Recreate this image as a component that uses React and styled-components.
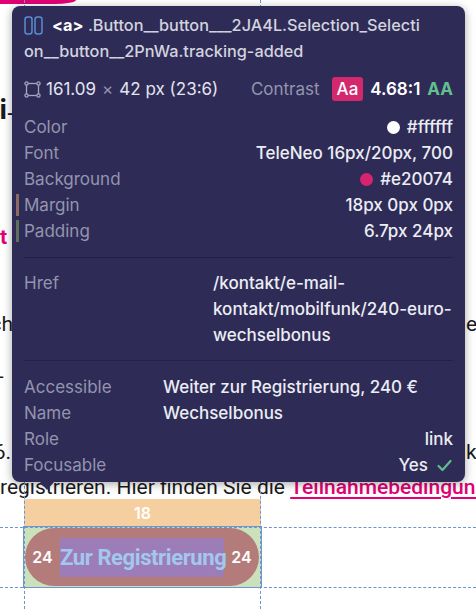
import React from "react"
import styled, { createGlobalStyle, css } from "styled-components"

const GlobalStyle = createGlobalStyle`
  html, body {
    margin: 0;
    padding: 0;
    background: #ffffff;
  }
  body {
    font-family: Roboto, "Noto Sans", sans-serif;
    overflow: hidden;
  }
`

const Page = styled.div`
  position: relative;
  width: 476px;
  height: 609px;
  overflow: hidden;
  background: #ffffff;
  display: flex;
  flex-direction: column;
`

const TopButtonEdge = styled.div`
  width: 76px;
  height: 4px;
  background: #e20074;
  border-bottom-right-radius: 22px 4px;
  flex: none;
`

const Line = styled.div`
  display: flex;
  justify-content: space-between;
  align-items: baseline;
  flex: none;
  height: ${(p) => p.$h}px;
  line-height: ${(p) => p.$h}px;
  margin-top: ${(p) => p.$mt || 0}px;
  font-size: ${(p) => p.$size || 21}px;
  font-weight: ${(p) => p.$weight || 400};
  color: ${(p) => p.$color || "#1a1a1a"};
  white-space: nowrap;
  overflow: hidden;
`

const LeftClip = styled.span`
  display: flex;
  justify-content: flex-end;
  width: ${(p) => p.$w}px;
  overflow: hidden;
`

const RightClip = styled.span`
  display: flex;
  width: ${(p) => p.$w}px;
  overflow: hidden;
`

const Tail = styled.span`
  font-size: 16px;
  margin-right: auto;
`

const Link = styled.span`
  color: #e20074;
  font-weight: 500;
  text-decoration: underline;
  text-underline-offset: 3px;
`

const Highlight = styled.div`
  margin-left: 24px;
  width: 237px;
  flex: none;
  display: flex;
  flex-direction: column;
`

const MarginArea = styled.div`
  height: 28px;
  background: #f6cfa0;
  color: #ffffff;
  font-family: Inter, sans-serif;
  font-weight: 600;
  font-size: 16px;
  line-height: 28px;
  text-align: center;
`

const ElementBox = styled.div`
  height: 60px;
  box-sizing: border-box;
  padding: 1px 2px 1px 1px;
  background: #cbe1bb;
  outline: 1px solid #6f97cf;
`

const Pill = styled.div`
  height: 100%;
  border-radius: 29px;
  background: #b37b7a;
  display: flex;
  align-items: center;
`

const PadLabel = styled.span`
  flex: 1;
  text-align: center;
  color: #ffffff;
  font-family: Inter, sans-serif;
  font-weight: 600;
  font-size: 16px;
`

const ContentArea = styled.span`
  width: 164px;
  height: 39px;
  background: #9c7db7;
  color: #a3c8ee;
  font-weight: 700;
  font-size: 22px;
  letter-spacing: -0.4px;
  line-height: 39px;
  text-align: center;
  white-space: nowrap;
`

const Guide = styled.div`
  position: absolute;
  ${(p) =>
    p.$vertical
      ? css`
          left: ${p.$at}px;
          top: 0;
          bottom: 0;
          border-left: 1px dashed #6d95cf;
        `
      : css`
          top: ${p.$at}px;
          left: 0;
          right: 0;
          border-top: 1px dashed #6d95cf;
        `}
`

const Tooltip = styled.div`
  position: absolute;
  left: 12px;
  top: 6px;
  width: 453px;
  box-sizing: border-box;
  padding: 6px 12px 4px;
  background: #2e2c57;
  border-radius: 8px;
  box-shadow: 0 2px 10px rgba(0, 0, 0, 0.35);
  font-family: Inter, "Noto Sans", sans-serif;
  font-size: 17px;
  line-height: 26px;
  color: #ececf4;

  &::after {
    content: "";
    position: absolute;
    left: 28px;
    bottom: -8px;
    border-left: 7px solid transparent;
    border-right: 7px solid transparent;
    border-top: 8px solid #2e2c57;
  }
`

const Header = styled.div`
  color: #d3d3df;
  font-size: 16.3px;
  font-weight: 500;
  white-space: nowrap;
`

const Tag = styled.b`
  color: #ffffff;
  font-weight: 700;
`

const ElementIcon = styled.svg`
  width: 19px;
  height: 19px;
  vertical-align: -4px;
  margin-right: 9px;
`

const DimsRow = styled.div`
  display: flex;
  align-items: center;
  height: 26px;
  margin-top: 12px;
  color: #e4e4ee;
`

const DimIcon = styled.svg`
  width: 17px;
  height: 17px;
  margin-right: 5px;
`

const Muted = styled.span`
  color: #9594ae;
  font-weight: 400;
  margin: ${(p) => p.$m || "0"};
`

const Spacer = styled.span`
  flex: 1;
`

const Badge = styled.span`
  height: 24px;
  line-height: 24px;
  padding: 0 5px;
  margin: 0 7px 0 12px;
  border-radius: 3px;
  background: #d3286e;
  color: #ffffff;
  font-weight: 500;
`

const Ratio = styled.span`
  color: #ffffff;
  font-weight: 600;
`

const Level = styled.span`
  color: #62c08f;
  font-weight: 700;
  margin-left: 7px;
`

const Section = styled.div`
  margin-top: ${(p) => p.$mt}px;
  padding-top: ${(p) => p.$pt}px;
  border-top: ${(p) => (p.$rule ? "1px solid #232146" : "none")};
`

const PropRow = styled.div`
  display: flex;
  justify-content: space-between;
  align-items: center;
  height: 26px;
`

const Label = styled.span`
  position: relative;
  color: #9594ae;

  ${(p) =>
    p.$marker &&
    css`
      &::before {
        content: "";
        position: absolute;
        left: -8px;
        top: 2px;
        bottom: 2px;
        width: 3px;
        background: ${p.$marker};
      }
    `}
`

const Value = styled.span`
  display: flex;
  align-items: center;
  font-weight: 500;
  color: #ececf4;
`

const BlockValue = styled.span`
  font-weight: 500;
  color: #ececf4;
`

const Swatch = styled.span`
  width: 13px;
  height: 13px;
  border-radius: 50%;
  background: ${(p) => p.$color};
  margin-right: 7px;
`

const GridRow = styled.div`
  display: grid;
  grid-template-columns: ${(p) => p.$label}px 1fr;
`

const Check = styled.svg`
  width: 17px;
  height: 17px;
  margin-left: 8px;
`

const props = [
  { label: "Color", value: "#ffffff", swatch: "#ffffff" },
  { label: "Font", value: "TeleNeo 16px/20px, 700" },
  { label: "Background", value: "#e20074", swatch: "#d8246f" },
  { label: "Margin", value: "18px 0px 0px", marker: "#8b6a60" },
  { label: "Padding", value: "6.7px 24px", marker: "#5e6f60" },
]

export default function App() {
  return (
    <>
      <GlobalStyle />
      <Page>
        <TopButtonEdge />
        <Line $h={36} $mt={88} $size={28} $weight={700}>
          <LeftClip $w={7}>ni</LeftClip>
          <Tail>-</Tail>
        </Line>
        <Line $h={30} $mt={94} $weight={700} $color="#e20074">
          <LeftClip $w={7}>jetzt</LeftClip>
        </Line>
        <Line $h={30} $mt={57}>
          <LeftClip $w={13}>Wechselbonus auch</LeftClip>
          <RightClip $w={10}>echt</RightClip>
        </Line>
        <Line $h={30} $mt={24}>
          <LeftClip $w={5}>–</LeftClip>
        </Line>
        <Line $h={30} $mt={44}>
          <LeftClip $w={11}>6.</LeftClip>
          <RightClip $w={10}>kann</RightClip>
        </Line>
        <Line $h={24} $mt={8}>
          <span>
            registrieren. Hier finden Sie die <Link>Teilnahmebedingungen</Link>
          </span>
        </Line>
        <Highlight>
          <MarginArea>18</MarginArea>
          <ElementBox>
            <Pill>
              <PadLabel>24</PadLabel>
              <ContentArea>Zur Registrierung</ContentArea>
              <PadLabel>24</PadLabel>
            </Pill>
          </ElementBox>
        </Highlight>

        <Guide $vertical $at={24} />
        <Guide $vertical $at={260} />
        <Guide $at={527} />
        <Guide $at={587} />

        <Tooltip>
          <Header>
            <ElementIcon viewBox="0 0 19 19" fill="none" stroke="#5a8dcf" strokeWidth="1.5">
              <rect x="1" y="1" width="7" height="17" rx="2.5" />
              <rect x="11" y="1" width="7" height="17" rx="2.5" />
            </ElementIcon>
            <Tag>&lt;a&gt;</Tag> .Button__button___2JA4L.Selection_Selecti
            <br />
            on__button__2PnWa.tracking-added
          </Header>
          <DimsRow>
            <DimIcon viewBox="0 0 17 17" fill="none" stroke="#a6a5bb" strokeWidth="1.3">
              <rect x="2.5" y="2.5" width="12" height="12" />
              <circle cx="2.5" cy="2.5" r="1.6" fill="#2e2c57" />
              <circle cx="14.5" cy="2.5" r="1.6" fill="#2e2c57" />
              <circle cx="2.5" cy="14.5" r="1.6" fill="#2e2c57" />
              <circle cx="14.5" cy="14.5" r="1.6" fill="#2e2c57" />
            </DimIcon>
            161.09<Muted $m="0 6px">×</Muted>42 px (23:6)
            <Spacer />
            <Muted>Contrast</Muted>
            <Badge>Aa</Badge>
            <Ratio>4.68:1</Ratio>
            <Level>AA</Level>
          </DimsRow>

          <Section $mt={12} $pt={0}>
            {props.map((p) => (
              <PropRow key={p.label}>
                <Label $marker={p.marker}>{p.label}</Label>
                <Value>
                  {p.swatch && <Swatch $color={p.swatch} />}
                  {p.value}
                </Value>
              </PropRow>
            ))}
          </Section>

          <Section $rule $mt={13} $pt={12}>
            <GridRow $label={189}>
              <Label>Href</Label>
              <BlockValue>
                /kontakt/e-mail-
                <br />
                kontakt/mobilfunk/240-euro-
                <br />
                wechselbonus
              </BlockValue>
            </GridRow>
          </Section>

          <Section $rule $mt={12} $pt={13}>
            <GridRow $label={139}>
              <Label>
                Accessible
                <br />
                Name
              </Label>
              <BlockValue>
                Weiter zur Registrierung, 240 €
                <br />
                Wechselbonus
              </BlockValue>
            </GridRow>
            <PropRow>
              <Label>Role</Label>
              <Value>link</Value>
            </PropRow>
            <PropRow>
              <Label>Focusable</Label>
              <Value>
                Yes
                <Check viewBox="0 0 17 17" fill="none" stroke="#5fbf8c" strokeWidth="2.2" strokeLinecap="round" strokeLinejoin="round">
                  <path d="M2.5 9 L6.5 13 L14.5 4" />
                </Check>
              </Value>
            </PropRow>
          </Section>
        </Tooltip>
      </Page>
    </>
  )
}
